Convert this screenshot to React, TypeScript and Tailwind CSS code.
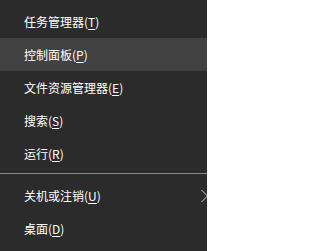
import React from "react";

type Item = { label: string; key: string; sub?: boolean; active?: boolean };

const TOP: Item[] = [
  { label: "任务管理器", key: "T" },
  { label: "控制面板", key: "P", active: true },
  { label: "文件资源管理器", key: "E" },
  { label: "搜索", key: "S" },
  { label: "运行", key: "R" },
];

const BOTTOM: Item[] = [
  { label: "关机或注销", key: "U", sub: true },
  { label: "桌面", key: "D" },
];

function Row({ item }: { item: Item }) {
  return (
    <div
      className={`flex h-[33px] items-center pl-[24px] text-[12px] leading-none text-white ${
        item.active ? "bg-[#414141]" : ""
      }`}
    >
      <span>
        {item.label}(<span className="underline underline-offset-[2px]">{item.key}</span>)
      </span>
      {item.sub && (
        <svg className="ml-auto mr-[-2px] shrink-0" width="8" height="14" viewBox="0 0 8 14" fill="none">
          <path d="M0.5 1 L6.5 7 L0.5 13" stroke="#d0d0d0" strokeWidth="1" />
        </svg>
      )}
    </div>
  );
}

export default function App() {
  return (
    <div
      className="h-[251px] w-[207px] overflow-hidden bg-[#2b2b2b] pt-[5px]"
      style={{ fontFamily: '"Noto Sans CJK SC", "Noto Sans", sans-serif' }}
    >
      {TOP.map((it) => (
        <Row key={it.key} item={it} />
      ))}
      <div className="mb-[5px] mt-[3px] h-px bg-[#8a8a8a]" />
      {BOTTOM.map((it) => (
        <Row key={it.key} item={it} />
      ))}
    </div>
  );
}
